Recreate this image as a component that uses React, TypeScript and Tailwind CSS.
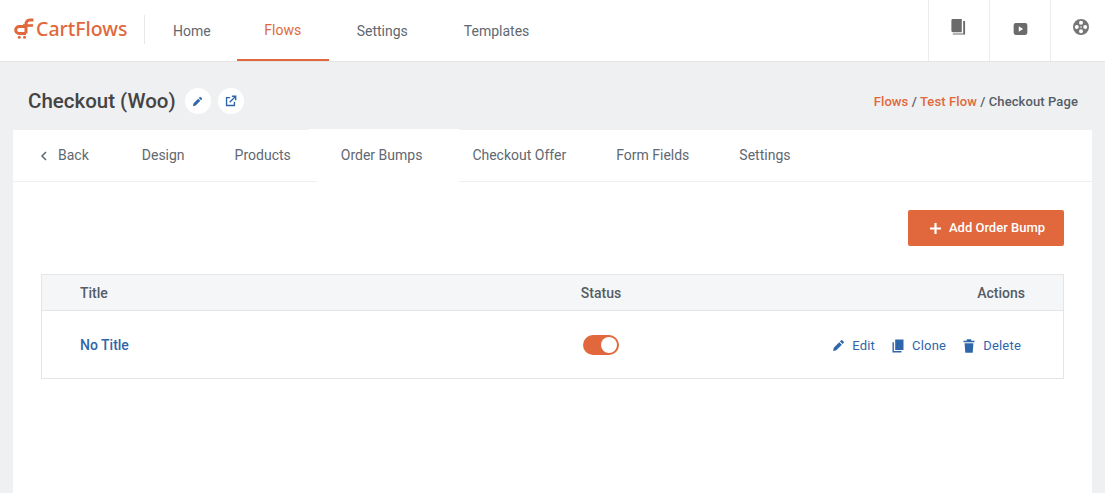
const font = { fontFamily: "Roboto, sans-serif" };

function PencilIcon({ className }: { className?: string }) {
  return (
    <svg viewBox="0 0 14 14" className={className} fill="currentColor">
      <path d="M9.600 1.600a1.300 1.300 0 0 1 1.800 0l1 1a1.300 1.300 0 0 1 0 1.800l-1 1-2.800-2.800zM7.800 3.400l2.800 2.800-6 6-3.400.7.7-3.500z" />
    </svg>
  );
}

function CloneIcon({ className }: { className?: string }) {
  return (
    <svg viewBox="0 0 14 14" className={className} fill="currentColor">
      <path d="M4.200 .5h8.300v10.500H4.200z" />
      <path d="M1.500 3.200h1.400v8.800h7.600v1.500H1.500z" />
    </svg>
  );
}

function TrashIcon({ className }: { className?: string }) {
  return (
    <svg viewBox="0 0 14 14" className={className} fill="currentColor">
      <path d="M5 .3h4l.5 1.400h3v1.600h-11V1.700h3z" />
      <path d="M2.600 4.300h8.800l-.7 9.400H3.300z" />
    </svg>
  );
}

function ExternalIcon({ className }: { className?: string }) {
  return (
    <svg viewBox="0 0 14 14" className={className} fill="none" stroke="currentColor" strokeWidth="1.600">
      <path d="M6 3H1.800v9.200H11V8" />
      <path d="M5.500 8.500 12 2M8 1.500h4.500V6" />
    </svg>
  );
}

function BookIcon() {
  return (
    <svg viewBox="0 0 16 18" className="h-[17px] w-[16px] text-[#6b6b6b]" fill="currentColor">
      <path d="M1 1.500A1.500 1.500 0 0 1 2.500 0H12v14H2.500A1.500 1.500 0 0 1 1 12.500z" />
      <path d="M13.500 2H15.500V16.500H2.500V15.300H13.500z" />
    </svg>
  );
}

function VideoIcon() {
  return (
    <svg viewBox="0 0 16 14" className="h-[12px] w-[15px] text-[#6b6b6b]" fill="currentColor" fillRule="evenodd">
      <path d="M2.500 0h11A2.500 2.500 0 0 1 16 2.500v9a2.500 2.500 0 0 1-2.500 2.500h-11A2.500 2.500 0 0 1 0 11.500v-9A2.500 2.500 0 0 1 2.500 0zM6 3.800v6.400L11 7z" />
    </svg>
  );
}

function SupportIcon() {
  return (
    <svg viewBox="0 0 16 16" className="h-[16px] w-[16px] text-[#767676]" fill="currentColor" fillRule="evenodd">
      <path d="M8 0a8 8 0 1 1 0 16A8 8 0 0 1 8 0zM8 1.800a2 2 0 1 0 0 4 2 2 0 0 0 0-4zM8 10.200a2 2 0 1 0 0 4 2 2 0 0 0 0-4zM3.800 6a2 2 0 1 0 0 4 2 2 0 0 0 0-4zM12.200 6a2 2 0 1 0 0 4 2 2 0 0 0 0-4zM8 7.200a.8.8 0 1 0 0 1.600.8.8 0 0 0 0-1.600z" />
    </svg>
  );
}

function Logo() {
  return (
    <div className="flex items-center gap-[2px]">
      <svg viewBox="0 0 21 21" className="h-[21px] w-[21px] text-[#e0683c]" fill="none" stroke="currentColor">
        <path d="M13 8.500H6.200a3.500 3.500 0 0 0 0 7H13" strokeWidth="3" />
        <path d="M20.500 2h-3.800a3.700 3.700 0 0 0-3.700 3.700V15.500" strokeWidth="3" />
        <path d="M10 7.500h10" strokeWidth="2.600" />
        <circle cx="6.300" cy="19.300" r="1.500" fill="currentColor" stroke="none" />
        <circle cx="11.500" cy="19.300" r="1.500" fill="currentColor" stroke="none" />
      </svg>
      <span className="text-[19.500px] leading-none font-medium text-[#e0683c]" style={{ fontFamily: "'Noto Sans', sans-serif" }}>
        CartFlows
      </span>
    </div>
  );
}

const tabs = ["Design", "Products", "Order Bumps", "Checkout Offer", "Form Fields", "Settings"];

export default function App() {
  return (
    <div className="flex h-[493px] w-[1105px] flex-col overflow-hidden bg-[#eff0f2] text-[14px] text-[#555d66]" style={font}>
      <header className="flex h-[62px] border-b border-[#e4e5e7] bg-white">
        <div className="flex items-center pl-[13px]">
          <div className="w-[131px] pb-[4px]"><Logo /></div>
          <div className="h-[29px] w-px -translate-y-[1px] bg-[#e8e8e8]" />
        </div>
        <nav className="flex">
          <a className="flex items-center pt-px pr-[26px] pl-[28px] text-[#616870]">Home</a>
          <a className="flex w-[92px] items-center justify-center border-b-2 border-[#e0683c] pt-[2px] text-[#e0683c]">Flows</a>
          <a className="flex items-center px-[28px] pt-px text-[#616870]">Settings</a>
          <a className="flex items-center px-[28px] pt-px text-[#616870]">Templates</a>
        </nav>
        <div className="ml-auto flex">
          <div className="flex w-[61px] items-center justify-center border-l border-[#ececec] pr-[2px] pb-[6px]"><BookIcon /></div>
          <div className="flex w-[61px] items-center justify-center border-l border-[#ececec] pb-[3px]"><VideoIcon /></div>
          <div className="flex w-[55px] items-center justify-center border-l border-[#ececec] pb-[7px] pl-[5px]"><SupportIcon /></div>
        </div>
      </header>

      <div className="flex h-[68px] items-center justify-between pt-[10px] pr-[27px] pl-[28px]">
        <div className="flex items-center">
          <h1 className="text-[20.500px] font-medium text-[#444]">Checkout (Woo)</h1>
          <span className="ml-[9px] flex h-[26px] w-[26px] items-center justify-center rounded-full bg-white text-[#2f66aa]">
            <PencilIcon className="h-[11px] w-[11px]" />
          </span>
          <span className="ml-[7px] flex h-[26px] w-[26px] items-center justify-center rounded-full bg-white text-[#2f66aa]">
            <ExternalIcon className="h-[12px] w-[12px]" />
          </span>
        </div>
        <div className="pt-px text-[13px] font-medium tracking-[0.1px] text-[#555d66]">
          <span className="text-[#e0683c]">Flows</span> / <span className="text-[#e0683c]">Test Flow</span> / Checkout Page
        </div>
      </div>

      <main className="mx-[13px] flex-1 bg-white">
        <div className="flex h-[52px] border-b border-[#eeeeee]">
          <a className="flex items-center gap-[10px] pr-[28px] pl-[27px] text-[#616870]">
            <svg viewBox="0 0 8 10" className="h-[10px] w-[8px]" fill="none" stroke="currentColor" strokeWidth="1.500">
              <path d="M6 1 2 5l4 4" />
            </svg>
            Back
          </a>
          {tabs.map((t) =>
            t === "Order Bumps" ? (
              <a key={t} className="relative -mt-px mr-[-12px] mb-[-1px] ml-[-7px] flex items-center bg-white pr-[37px] pl-[32px] text-[#616870]">
                {t}
                <span className="absolute bottom-0 left-0 h-px w-[8px] bg-[#eeeeee]" />
              </a>
            ) : (
              <a key={t} className="flex items-center px-[25px] text-[#616870]">
                {t}
              </a>
            )
          )}
        </div>

        <div className="px-[28px] pt-[28px]">
          <div className="flex justify-end">
            <button className="flex h-[36px] w-[156px] items-center justify-center gap-[8px] rounded-[2px] bg-[#e0683c] pl-[3px] text-[13px] font-medium text-white">
              <svg viewBox="0 0 12 12" className="h-[11px] w-[11px]" fill="currentColor">
                <path d="M4.800 0h2.400v4.800H12v2.400H7.200V12H4.800V7.200H0V4.800h4.800z" />
              </svg>
              Add Order Bump
            </button>
          </div>

          <div className="mt-[28px] border border-[#e4e5e7]">
            <div className="grid h-[36px] grid-cols-[499px_120px_1fr] items-center border-b border-[#e4e5e7] bg-[#f5f6f7] pt-[2px] font-medium text-[#555d66]">
              <div className="pl-[38px]">Title</div>
              <div className="text-center">Status</div>
              <div className="pr-[38px] text-right">Actions</div>
            </div>
            <div className="grid h-[67px] grid-cols-[499px_120px_1fr] items-center">
              <a className="pt-[2px] pl-[38px] font-medium text-[#2f66aa]">No Title</a>
              <div className="flex justify-center">
                <span className="flex h-[20px] w-[36px] items-center justify-end rounded-full bg-[#e0683c] pr-[2px]">
                  <span className="h-[16px] w-[16px] rounded-full bg-white" />
                </span>
              </div>
              <div className="flex items-center justify-end gap-[16px] pt-[2px] pr-[42px] text-[13px] tracking-[0.2px] text-[#2f66aa]">
                <span className="flex items-center gap-[7px]"><PencilIcon className="h-[13px] w-[13px]" />Edit</span>
                <span className="flex items-center gap-[7px]"><CloneIcon className="h-[14px] w-[14px]" />Clone</span>
                <span className="flex items-center gap-[7px]"><TrashIcon className="h-[14px] w-[14px]" />Delete</span>
              </div>
            </div>
          </div>
        </div>
      </main>
    </div>
  );
}
